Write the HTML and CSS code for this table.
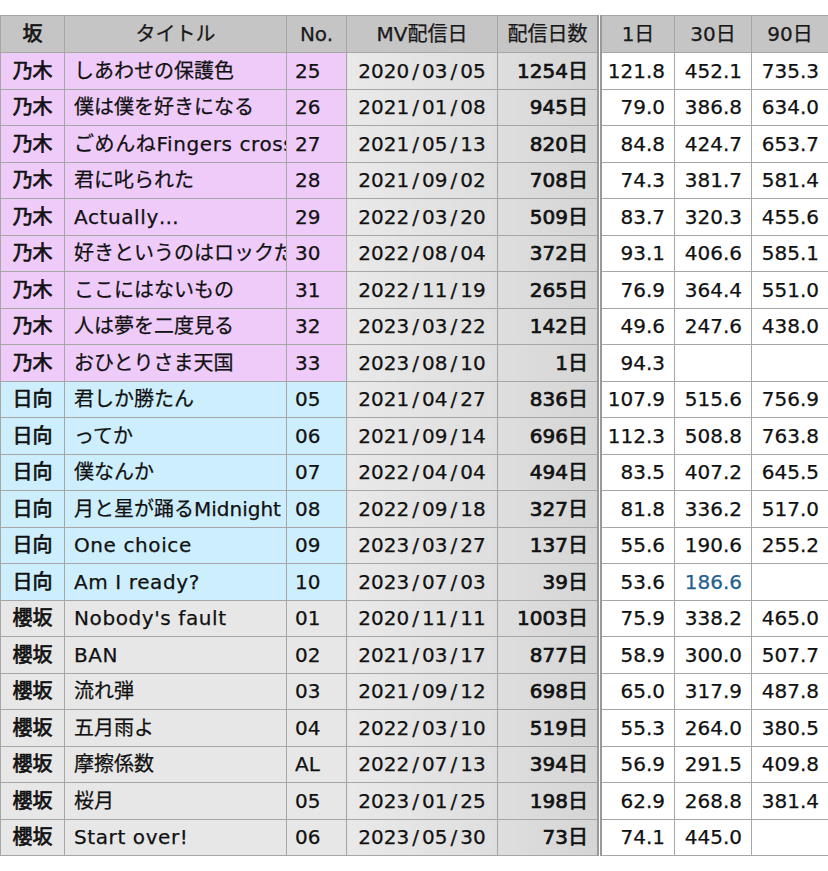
FILE: index.html
```html
<!DOCTYPE html>
<html lang="ja">
<head>
<meta charset="utf-8">
<title>MV再生数</title>
<link rel="stylesheet" href="styles.css">
</head>
<body>
<table class="sheet">
  <colgroup>
    <col class="c-group"><col class="c-title"><col class="c-no"><col class="c-date"><col class="c-days"><col class="c-num1"><col class="c-num30"><col class="c-num90">
  </colgroup>
  <thead>
    <tr>
      <th class="h-group">坂</th><th>タイトル</th><th>No.</th><th>MV配信日</th><th class="h-days">配信日数</th><th>1日</th><th>30日</th><th>90日</th>
    </tr>
  </thead>
  <tbody>
    <tr class="nogi"><td class="group">乃木</td><td class="title">しあわせの保護色</td><td class="no">25</td><td class="date">2020<span class="sl">/</span>03<span class="sl">/</span>05</td><td class="days">1254日</td><td class="num">121.8</td><td class="num">452.1</td><td class="num">735.3</td></tr>
    <tr class="nogi"><td class="group">乃木</td><td class="title">僕は僕を好きになる</td><td class="no">26</td><td class="date">2021<span class="sl">/</span>01<span class="sl">/</span>08</td><td class="days">945日</td><td class="num">79.0</td><td class="num">386.8</td><td class="num">634.0</td></tr>
    <tr class="nogi"><td class="group">乃木</td><td class="title lat">ごめんねFingers crossed</td><td class="no">27</td><td class="date">2021<span class="sl">/</span>05<span class="sl">/</span>13</td><td class="days">820日</td><td class="num">84.8</td><td class="num">424.7</td><td class="num">653.7</td></tr>
    <tr class="nogi"><td class="group">乃木</td><td class="title">君に叱られた</td><td class="no">28</td><td class="date">2021<span class="sl">/</span>09<span class="sl">/</span>02</td><td class="days">708日</td><td class="num">74.3</td><td class="num">381.7</td><td class="num">581.4</td></tr>
    <tr class="nogi"><td class="group">乃木</td><td class="title lat">Actually…</td><td class="no">29</td><td class="date">2022<span class="sl">/</span>03<span class="sl">/</span>20</td><td class="days">509日</td><td class="num">83.7</td><td class="num">320.3</td><td class="num">455.6</td></tr>
    <tr class="nogi"><td class="group">乃木</td><td class="title">好きというのはロックだぜ！</td><td class="no">30</td><td class="date">2022<span class="sl">/</span>08<span class="sl">/</span>04</td><td class="days">372日</td><td class="num">93.1</td><td class="num">406.6</td><td class="num">585.1</td></tr>
    <tr class="nogi"><td class="group">乃木</td><td class="title">ここにはないもの</td><td class="no">31</td><td class="date">2022<span class="sl">/</span>11<span class="sl">/</span>19</td><td class="days">265日</td><td class="num">76.9</td><td class="num">364.4</td><td class="num">551.0</td></tr>
    <tr class="nogi"><td class="group">乃木</td><td class="title">人は夢を二度見る</td><td class="no">32</td><td class="date">2023<span class="sl">/</span>03<span class="sl">/</span>22</td><td class="days">142日</td><td class="num">49.6</td><td class="num">247.6</td><td class="num">438.0</td></tr>
    <tr class="nogi"><td class="group">乃木</td><td class="title">おひとりさま天国</td><td class="no">33</td><td class="date">2023<span class="sl">/</span>08<span class="sl">/</span>10</td><td class="days">1日</td><td class="num">94.3</td><td class="num"></td><td class="num"></td></tr>
    <tr class="hinata"><td class="group">日向</td><td class="title">君しか勝たん</td><td class="no">05</td><td class="date">2021<span class="sl">/</span>04<span class="sl">/</span>27</td><td class="days">836日</td><td class="num">107.9</td><td class="num">515.6</td><td class="num">756.9</td></tr>
    <tr class="hinata"><td class="group">日向</td><td class="title">ってか</td><td class="no">06</td><td class="date">2021<span class="sl">/</span>09<span class="sl">/</span>14</td><td class="days">696日</td><td class="num">112.3</td><td class="num">508.8</td><td class="num">763.8</td></tr>
    <tr class="hinata"><td class="group">日向</td><td class="title">僕なんか</td><td class="no">07</td><td class="date">2022<span class="sl">/</span>04<span class="sl">/</span>04</td><td class="days">494日</td><td class="num">83.5</td><td class="num">407.2</td><td class="num">645.5</td></tr>
    <tr class="hinata"><td class="group">日向</td><td class="title">月と星が踊るMidnight</td><td class="no">08</td><td class="date">2022<span class="sl">/</span>09<span class="sl">/</span>18</td><td class="days">327日</td><td class="num">81.8</td><td class="num">336.2</td><td class="num">517.0</td></tr>
    <tr class="hinata"><td class="group">日向</td><td class="title lat">One choice</td><td class="no">09</td><td class="date">2023<span class="sl">/</span>03<span class="sl">/</span>27</td><td class="days">137日</td><td class="num">55.6</td><td class="num">190.6</td><td class="num">255.2</td></tr>
    <tr class="hinata"><td class="group">日向</td><td class="title lat">Am I ready?</td><td class="no">10</td><td class="date">2023<span class="sl">/</span>07<span class="sl">/</span>03</td><td class="days">39日</td><td class="num">53.6</td><td class="num partial">186.6</td><td class="num"></td></tr>
    <tr class="sakura"><td class="group">櫻坂</td><td class="title lat">Nobody's fault</td><td class="no">01</td><td class="date">2020<span class="sl">/</span>11<span class="sl">/</span>11</td><td class="days">1003日</td><td class="num">75.9</td><td class="num">338.2</td><td class="num">465.0</td></tr>
    <tr class="sakura"><td class="group">櫻坂</td><td class="title lat">BAN</td><td class="no">02</td><td class="date">2021<span class="sl">/</span>03<span class="sl">/</span>17</td><td class="days">877日</td><td class="num">58.9</td><td class="num">300.0</td><td class="num">507.7</td></tr>
    <tr class="sakura"><td class="group">櫻坂</td><td class="title">流れ弾</td><td class="no">03</td><td class="date">2021<span class="sl">/</span>09<span class="sl">/</span>12</td><td class="days">698日</td><td class="num">65.0</td><td class="num">317.9</td><td class="num">487.8</td></tr>
    <tr class="sakura"><td class="group">櫻坂</td><td class="title">五月雨よ</td><td class="no">04</td><td class="date">2022<span class="sl">/</span>03<span class="sl">/</span>10</td><td class="days">519日</td><td class="num">55.3</td><td class="num">264.0</td><td class="num">380.5</td></tr>
    <tr class="sakura"><td class="group">櫻坂</td><td class="title">摩擦係数</td><td class="no">AL</td><td class="date">2022<span class="sl">/</span>07<span class="sl">/</span>13</td><td class="days">394日</td><td class="num">56.9</td><td class="num">291.5</td><td class="num">409.8</td></tr>
    <tr class="sakura"><td class="group">櫻坂</td><td class="title">桜月</td><td class="no">05</td><td class="date">2023<span class="sl">/</span>01<span class="sl">/</span>25</td><td class="days">198日</td><td class="num">62.9</td><td class="num">268.8</td><td class="num">381.4</td></tr>
    <tr class="sakura"><td class="group">櫻坂</td><td class="title lat">Start over!</td><td class="no">06</td><td class="date">2023<span class="sl">/</span>05<span class="sl">/</span>30</td><td class="days">73日</td><td class="num">74.1</td><td class="num">445.0</td><td class="num"></td></tr>
  </tbody>
</table>
</body>
</html>
```
FILE: styles.css
```css
html, body {
  margin: 0;
  padding: 0;
  background: #ffffff;
}
body {
  padding-top: 15px;
  font-family: "DejaVu Sans", "Noto Sans CJK JP", sans-serif;
  font-size: 20px;
  color: #111111;
  -webkit-text-stroke: 0.25px #111111;
}
.sheet {
  border-collapse: collapse;
  table-layout: fixed;
  width: 828px;
}
.c-group { width: 64px; }
.c-title { width: 222px; }
.c-no { width: 60px; }
.c-date { width: 151px; }
.c-days { width: 102px; }
.c-num1 { width: 75px; }
.c-num30 { width: 77px; }
.c-num90 { width: 77px; }

.sheet th, .sheet td {
  border: 1px solid #a6a6a6;
  white-space: nowrap;
  overflow: hidden;
  padding: 0;
  line-height: 24px;
}
.sheet th {
  height: 36px;
  background: #c5c5c5;
  font-weight: normal;
  text-align: center;
  color: #1a1a1a;
}
.sheet th.h-group {
  -webkit-text-stroke: 0.7px #111111;
}
.sheet th.h-days,
.sheet td.days {
  border-right: 5px double #999999;
}
.sheet td {
  height: 35.5px;
}
.nogi td { background: #efcbfa; }
.hinata td { background: #cdeefc; }
.sakura td { background: #e7e7e7; }

.sheet td.group {
  text-align: center;
  -webkit-text-stroke: 0.7px #111111;
}
.sheet td.title {
  padding-left: 9px;
  text-overflow: clip;
}
.sheet td.title.lat {
  letter-spacing: 0.6px;
}
.sheet td.no {
  padding-left: 8px;
}
.sheet td.date {
  text-align: center;
  background: linear-gradient(to right, #e9e9e9, #dedede);
}
.sl {
  padding: 0 3px;
}
.sheet td.days {
  text-align: right;
  padding-right: 9px;
  -webkit-text-stroke: 0.7px #111111;
  background: linear-gradient(to right, #dedede, #d5d5d5);
}
.sheet td.num {
  text-align: right;
  padding-right: 9px;
  background: #ffffff;
}
.sheet td.partial {
  color: #1f5f8f;
  -webkit-text-stroke: 0.25px #1f5f8f;
}
```
